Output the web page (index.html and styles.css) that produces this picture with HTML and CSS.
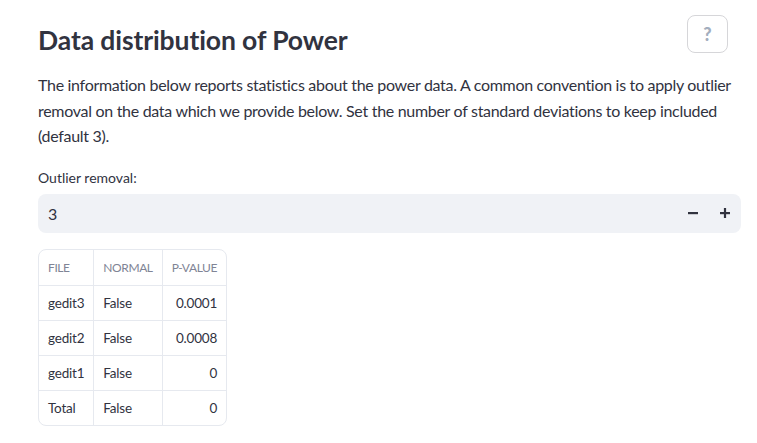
FILE: index.html
```html
<!DOCTYPE html>
<html>
<head>
<meta charset="utf-8">
<link rel="stylesheet" href="styles.css">
</head>
<body>
<div class="page">
  <div class="header">
    <h2 class="title">Data distribution of Power</h2>
    <button class="help">?</button>
  </div>
  <p class="intro">The information below reports statistics about the power data. A common convention is to apply outlier removal on the data which we provide below. Set the number of standard deviations to keep included (default 3).</p>
  <div class="field">
    <label class="label">Outlier removal:</label>
    <div class="number-input">
      <span class="value">3</span>
      <div class="steppers">
        <span class="step">
          <svg width="10" height="10" viewBox="0 0 10 10"><rect x="0" y="4" width="10" height="2.2" fill="#31333f"/></svg>
        </span>
        <span class="step">
          <svg width="10" height="10" viewBox="0 0 10 10"><rect x="0" y="4" width="10" height="2.2" fill="#31333f"/><rect x="3.9" y="0" width="2.2" height="10" fill="#31333f"/></svg>
        </span>
      </div>
    </div>
  </div>
  <div class="table-wrap">
    <table class="data">
      <thead>
        <tr><th>File</th><th>Normal</th><th class="num">P-Value</th></tr>
      </thead>
      <tbody>
        <tr><td>gedit3</td><td>False</td><td class="num">0.0001</td></tr>
        <tr><td>gedit2</td><td>False</td><td class="num">0.0008</td></tr>
        <tr><td>gedit1</td><td>False</td><td class="num">0</td></tr>
        <tr><td>Total</td><td>False</td><td class="num">0</td></tr>
      </tbody>
    </table>
  </div>
</div>
</body>
</html>
```

FILE: styles.css
```css
html, body {
  margin: 0;
  padding: 0;
  background: #ffffff;
}
body {
  font-family: "Lato", "Noto Sans", sans-serif;
  color: #31333f;
}
.page {
  padding: 15px 16px 0 38px;
}
.header {
  display: flex;
  justify-content: space-between;
  align-items: flex-start;
}
.title {
  margin: 8px 0 0 0;
  font-size: 26.5px;
  font-weight: 700;
  line-height: 34px;
  letter-spacing: -0.1px;
}
.help {
  width: 41px;
  height: 38px;
  margin-right: 13px;
  border: 1px solid #d6d6d9;
  border-radius: 8px;
  background: #fff;
  color: #a3aebe;
  font-family: "Lato", sans-serif;
  font-weight: 900;
  font-size: 18px;
  padding: 0;
}
.intro {
  margin: 15px 0 0 0;
  font-size: 16px;
  line-height: 25.6px;
  letter-spacing: -0.3px;
}
.field {
  margin-top: 19px;
}
.label {
  display: block;
  font-size: 14px;
  line-height: 20px;
  margin-bottom: 6px;
}
.number-input {
  display: flex;
  align-items: center;
  justify-content: space-between;
  height: 39px;
  background: #f0f2f6;
  border-radius: 8px;
  padding: 0 11px 0 10px;
}
.value {
  font-size: 16px;
}
.steppers {
  display: flex;
  gap: 22px;
}
.step {
  display: flex;
  align-items: center;
}
.table-wrap {
  margin-top: 16px;
  display: inline-block;
  border: 1px solid #e6e9ef;
  border-radius: 8px;
  overflow: hidden;
}
.data {
  border-collapse: collapse;
  font-size: 13.5px;
  letter-spacing: -0.2px;
}
.data th, .data td {
  border-right: 1px solid #e6e9ef;
  border-bottom: 1px solid #e6e9ef;
  padding: 0 9px;
  text-align: left;
  white-space: nowrap;
}
.data th:last-child, .data td:last-child {
  border-right: none;
}
.data tbody tr:last-child td {
  border-bottom: none;
}
.data th {
  height: 35px;
  font-size: 12px;
  letter-spacing: -0.4px;
  font-weight: 400;
  color: #808495;
  text-transform: uppercase;
}
.data td {
  height: 34px;
}
.data .num {
  text-align: right;
}
```
